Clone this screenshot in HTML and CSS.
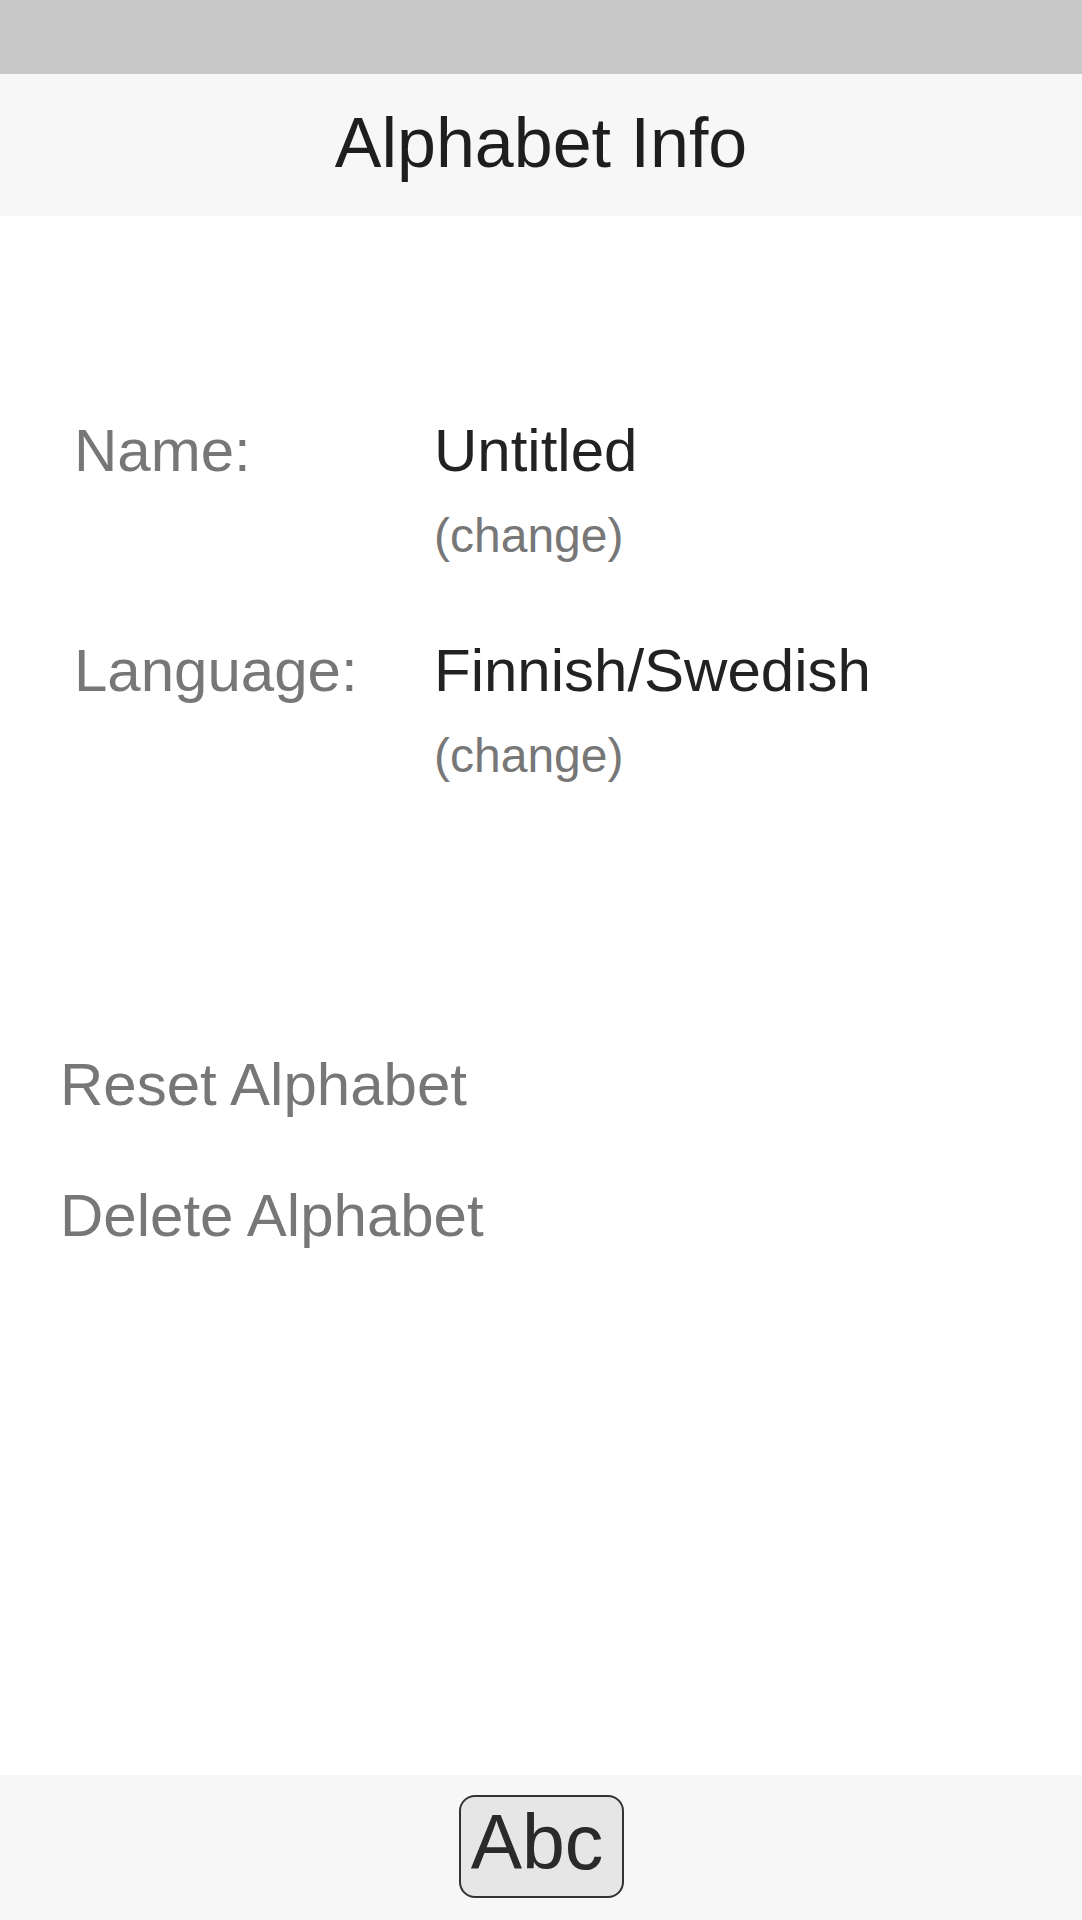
FILE: index.html
```html
<!DOCTYPE html>
<html lang="en">
<head>
<meta charset="utf-8">
<title>Alphabet Info</title>
<link rel="stylesheet" href="styles.css">
</head>
<body>
<div class="screen">
  <div class="status-bar"></div>
  <header class="nav-bar">
    <h1 class="nav-title">Alphabet Info</h1>
  </header>
  <main class="content">
    <section class="details">
      <div class="row">
        <div class="label">Name:</div>
        <div class="value-block">
          <div class="value">Untitled</div>
          <div class="change">(change)</div>
        </div>
      </div>
      <div class="row">
        <div class="label">Language:</div>
        <div class="value-block">
          <div class="value">Finnish/Swedish</div>
          <div class="change">(change)</div>
        </div>
      </div>
    </section>
    <section class="actions">
      <div class="action">Reset Alphabet</div>
      <div class="action">Delete Alphabet</div>
    </section>
  </main>
  <footer class="tool-bar">
    <div class="abc-button">Abc</div>
  </footer>
</div>
</body>
</html>
```
FILE: styles.css
```css
html, body {
  margin: 0;
  padding: 0;
  background: #ffffff;
}

body {
  font-family: "Liberation Sans", Arial, Helvetica, sans-serif;
}

.screen {
  width: 1082px;
  height: 1920px;
  display: flex;
  flex-direction: column;
  overflow: hidden;
}

.status-bar {
  height: 74px;
  background: #c8c8c8;
  flex: none;
}

.nav-bar {
  height: 142px;
  background: #f7f7f7;
  flex: none;
  box-sizing: border-box;
  padding-bottom: 4px;
}

.nav-title {
  margin: 0;
  font-size: 70px;
  font-weight: normal;
  line-height: 138px;
  text-align: center;
  color: #1e1e1e;
}

.content {
  flex: 1;
  display: flex;
  flex-direction: column;
}

.details {
  padding-top: 199px;
  padding-left: 74px;
  display: flex;
  flex-direction: column;
  gap: 69px;
}

.row {
  display: grid;
  grid-template-columns: 360px 1fr;
}

.label {
  font-size: 60px;
  line-height: 72px;
  color: #777777;
}

.value-block {
  display: flex;
  flex-direction: column;
  gap: 19px;
}

.value {
  font-size: 60px;
  line-height: 72px;
  color: #222222;
}

.change {
  font-size: 48px;
  line-height: 60px;
  color: #777777;
}

.actions {
  padding-top: 263px;
  padding-left: 60px;
  display: flex;
  flex-direction: column;
  gap: 59px;
}

.action {
  font-size: 60px;
  line-height: 72px;
  color: #777777;
}

.tool-bar {
  height: 145px;
  flex: none;
  background: #f7f7f7;
  display: flex;
  justify-content: center;
  align-items: flex-start;
  padding-top: 20px;
  box-sizing: border-box;
}

.abc-button {
  width: 165px;
  height: 103px;
  box-sizing: border-box;
  border: 2px solid #333333;
  border-radius: 16px;
  background: #e6e6e6;
  font-size: 77px;
  line-height: 91px;
  padding-bottom: 8px;
  padding-right: 8px;
  text-align: center;
  color: #2a2a2a;
}
```
